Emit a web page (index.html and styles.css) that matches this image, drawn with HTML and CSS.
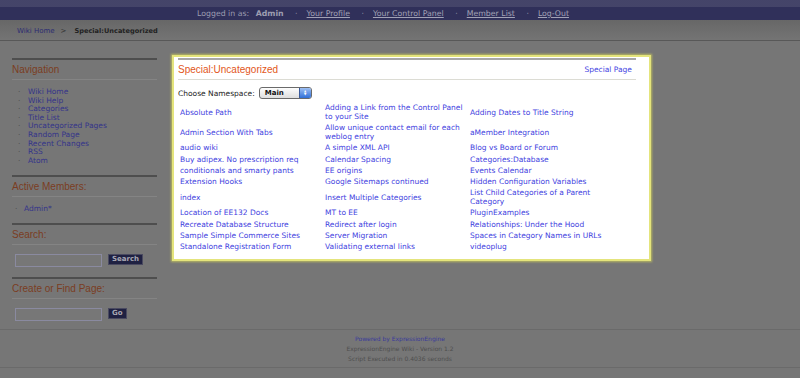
FILE: index.html
```html
<!DOCTYPE html>
<html lang="en">
<head>
  <meta charset="UTF-8">
  <title>Special:Uncategorized</title>
  <link rel="stylesheet" href="styles.css">
</head>
<body>
  <div class="topbar">
    <div class="dots"></div>
    <div class="userbar">
      Logged in as: <b>Admin</b>
      <span class="sep">·</span><a href="#">Your Profile</a>
      <span class="sep">·</span><a href="#">Your Control Panel</a>
      <span class="sep">·</span><a href="#">Member List</a>
      <span class="sep">·</span><a href="#">Log-Out</a>
    </div>
  </div>
  <div class="crumbs">
    <a href="#">Wiki Home</a><span class="gt">&gt;</span><b>Special:Uncategorized</b>
  </div>

  <div class="page">
    <div class="sidebar">
      <div class="block">
        <h3>Navigation</h3>
        <ul>
          <li><a href="#">Wiki Home</a></li>
          <li><a href="#">Wiki Help</a></li>
          <li><a href="#">Categories</a></li>
          <li><a href="#">Title List</a></li>
          <li><a href="#">Uncategorized Pages</a></li>
          <li><a href="#">Random Page</a></li>
          <li><a href="#">Recent Changes</a></li>
          <li><a href="#">RSS</a></li>
          <li><a href="#">Atom</a></li>
        </ul>
      </div>
      <div class="block">
        <h3>Active Members:</h3>
        <ul class="members">
          <li><a href="#">Admin*</a></li>
        </ul>
      </div>
      <div class="block">
        <h3>Search:</h3>
        <form class="sideform">
          <input type="text"><button type="button">Search</button>
        </form>
      </div>
      <div class="block">
        <h3>Create or Find Page:</h3>
        <form class="sideform last">
          <input type="text"><button type="button">Go</button>
        </form>
      </div>
    </div>

    <div class="main">
      <div class="box">
        <div class="boxhead">
          <h2>Special:Uncategorized</h2>
          <a href="#">Special Page</a>
        </div>
        <div class="namespace">
          Choose Namespace:
          <span class="select"><span class="val">Main</span><span class="arrows"><i>&#9650;</i><i>&#9660;</i></span></span>
        </div>
        <div class="pages">
          <a href="#">Absolute Path</a>
          <a href="#">Adding a Link from the Control Panel to your Site</a>
          <a href="#">Adding Dates to Title String</a>
          <a href="#">Admin Section With Tabs</a>
          <a href="#">Allow unique contact email for each weblog entry</a>
          <a href="#">aMember Integration</a>
          <a href="#">audio wiki</a>
          <a href="#">A simple XML API</a>
          <a href="#">Blog vs Board or Forum</a>
          <a href="#">Buy adipex. No prescription req</a>
          <a href="#">Calendar Spacing</a>
          <a href="#">Categories:Database</a>
          <a href="#">conditionals and smarty pants</a>
          <a href="#">EE origins</a>
          <a href="#">Events Calendar</a>
          <a href="#">Extension Hooks</a>
          <a href="#">Google Sitemaps continued</a>
          <a href="#">Hidden Configuration Variables</a>
          <a href="#">index</a>
          <a href="#">Insert Multiple Categories</a>
          <a href="#">List Child Categories of a Parent Category</a>
          <a href="#">Location of EE132 Docs</a>
          <a href="#">MT to EE</a>
          <a href="#">PluginExamples</a>
          <a href="#">Recreate Database Structure</a>
          <a href="#">Redirect after login</a>
          <a href="#">Relationships: Under the Hood</a>
          <a href="#">Sample Simple Commerce Sites</a>
          <a href="#">Server Migration</a>
          <a href="#">Spaces in Category Names in URLs</a>
          <a href="#">Standalone Registration Form</a>
          <a href="#">Validating external links</a>
          <a href="#">videoplug</a>
        </div>
      </div>
    </div>
  </div>

  <div class="footer">
    <a href="#">Powered by ExpressionEngine</a>
    <div>ExpressionEngine Wiki - Version 1.2</div>
    <div>Script Executed in 0.4036 seconds</div>
  </div>
</body>
</html>
```

FILE: styles.css
```css
body{
  margin:0;
  background:#767676;
  font-family:"DejaVu Sans",Verdana,sans-serif;
  font-size:7.5px;
  color:#333;
}
a{
  text-decoration:none;
}
/* top user bar */
.topbar{
  background:#30305a;
}
.dots{
  height:7px;
  background-color:#323256;
  background-image:radial-gradient(circle,#45456a 0.7px,transparent 0.9px);
  background-size:2px 2px;
}
.userbar{
  height:13px;
  line-height:13px;
  text-align:center;
  color:#9c9cb0;
  font-size:7.8px;
  padding-right:34px;
}
.userbar b{
  margin-left:4px;
}
.userbar a{
  color:#a2a2b6;
  text-decoration:underline;
}
.userbar .sep{
  margin:0 9px;
}
/* breadcrumb */
.crumbs{
  height:18px;
  padding:2px 0 0 17px;
  line-height:18px;
  font-size:7px;
  background:linear-gradient(#676767,#747474);
  border-bottom:1px solid #585858;
}
.crumbs a{
  color:#2c2c72;
}
.crumbs .gt{
  margin:0 8px 0 6px;
  color:#303030;
}
.crumbs b{
  color:#222;
  font-size:6.6px;
}
/* layout */
.page{
  display:flex;
  padding:0 12px;
}
.sidebar{
  width:145px;
  margin-top:17px;
}
.main{
  margin-left:15px;
  margin-top:14px;
  width:479px;
}
/* sidebar blocks */
.block{
  border-top:2px solid #4e4e4e;
}
.block h3{
  margin:0;
  padding:4px 0;
  line-height:11px;
  font-family:"Liberation Sans",Arial,sans-serif;
  font-size:10px;
  font-weight:normal;
  color:#7b3d22;
  border-bottom:1px solid #848484;
}
.block ul{
  list-style:none;
  margin:8px 0 10px;
  padding:0 0 0 6px;
  line-height:8.6px;
}
.block li::before{
  content:"·";
  display:inline-block;
  width:10px;
  color:#4a4a4a;
}
.block li a{
  color:#34348a;
}
.block .members{
  padding-left:3px;
  margin-bottom:9px;
}
.block .members li::before{
  width:9px;
}
.sideform{
  display:flex;
  align-items:flex-start;
  margin:9px 0 10px 3px;
}
.sideform.last{
  margin-bottom:8px;
}
.sideform input{
  width:87px;
  height:13px;
  box-sizing:border-box;
  background:#777;
  border:1px solid #8a8aa0;
  padding:0;
}
.sideform button{
  margin-left:6px;
  height:11px;
  padding:0 3px;
  background:#1f2142;
  border:1px solid #4a4a60;
  color:#a8a8b4;
  font-family:"DejaVu Sans",Verdana,sans-serif;
  font-size:7px;
  font-weight:bold;
  line-height:9px;
}
/* highlighted content box */
.box{
  background:#fff;
  border:2px solid #e4e47c;
  box-shadow:0 0 2px 1px #b8b860;
  padding:1px 13px 7px 4px;
}
.boxhead{
  display:flex;
  justify-content:space-between;
  align-items:center;
  border-top:2px solid #a8a8a8;
  border-bottom:1px solid #dcdcd4;
  padding:4px 4px 4px 0;
}
.boxhead h2{
  margin:0;
  line-height:11px;
  font-family:"Liberation Sans",Arial,sans-serif;
  font-size:10px;
  font-weight:normal;
  color:#e2561a;
}
.boxhead a{
  color:#4444e2;
}
.namespace{
  display:flex;
  align-items:center;
  margin-top:7px;
  height:12px;
  color:#222;
}
.select{
  display:inline-flex;
  margin-left:4px;
  width:53px;
  height:12px;
  box-sizing:border-box;
  border:1px solid #6a6a6a;
  border-radius:3px;
  background:linear-gradient(#fdfdfd,#dedede);
  overflow:hidden;
}
.select .val{
  flex:1;
  padding-left:5px;
  font-weight:bold;
  font-size:7px;
  line-height:10px;
  color:#111;
}
.select .arrows{
  width:11px;
  display:flex;
  flex-direction:column;
  align-items:center;
  justify-content:center;
  background:linear-gradient(#9ec0f4,#2f6fd8);
  border-left:1px solid #3a5a9a;
  color:#fff;
}
.select i{
  font-style:normal;
  font-size:3px;
  line-height:3.5px;
}
.pages{
  display:grid;
  grid-template-columns:145px 145px 150px;
  align-items:center;
  margin-top:3px;
  line-height:9px;
}
.pages a{
  padding:1.1px 2px;
  color:#4242e0;
}
/* footer */
.footer{
  border-top:1px solid #6a6a6a;
  border-bottom:1px solid #6a6a6a;
  padding:4px 0 3px;
  text-align:center;
  font-size:6px;
  line-height:10px;
  color:#4e4e4e;
}
.footer a{
  color:#3a3a9a;
}
```
